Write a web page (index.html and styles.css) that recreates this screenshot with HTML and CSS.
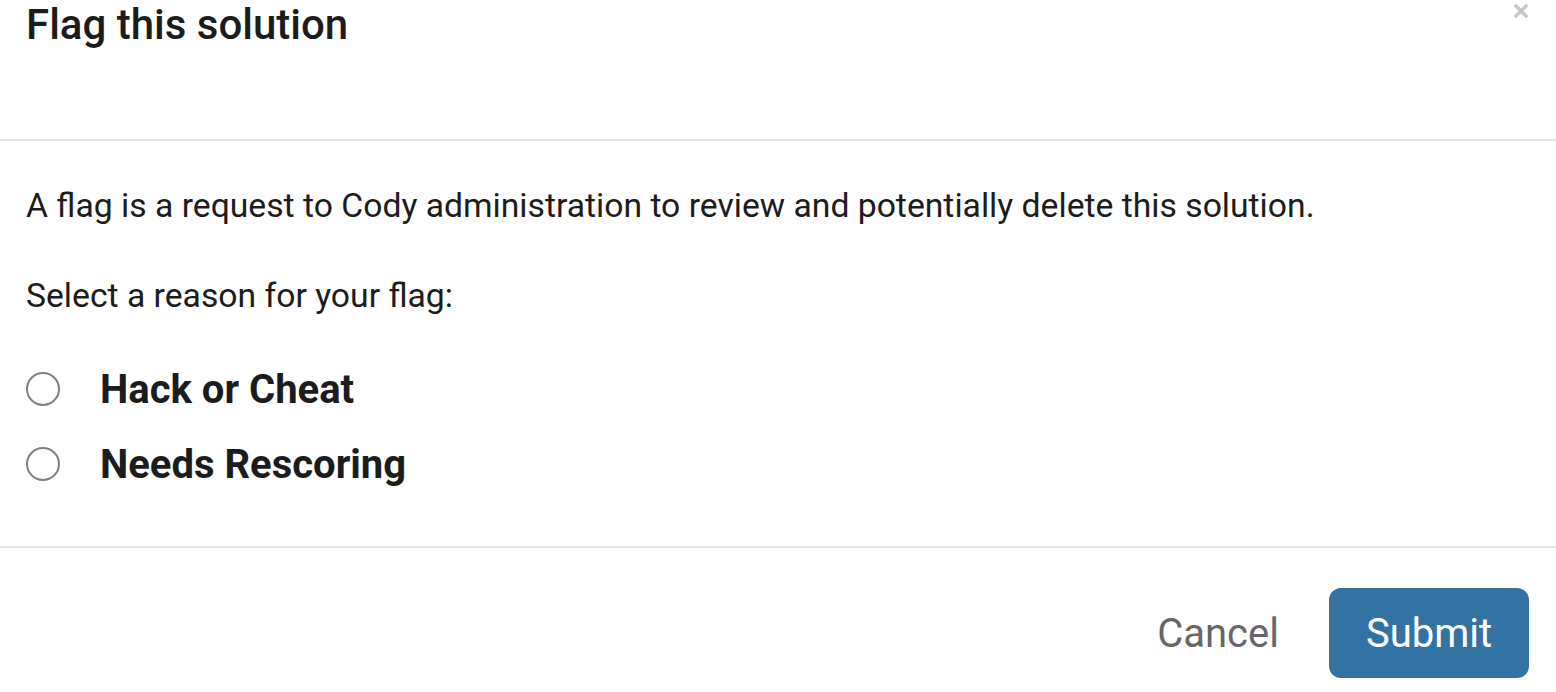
FILE: index.html
```html
<!DOCTYPE html>
<html>
<head>
<meta charset="utf-8">
<link rel="stylesheet" href="styles.css">
</head>
<body>
<div class="modal">
  <div class="modal-header">
    <h4 class="modal-title">Flag this solution</h4>
    <button class="close" type="button" aria-label="Close">
      <svg class="close-icon" viewBox="0 0 14 14" width="14" height="14" aria-hidden="true">
        <path d="M2 2 L12 12 M12 2 L2 12" stroke="#c8c8c8" stroke-width="3.4" stroke-linecap="square" fill="none"/>
      </svg>
    </button>
  </div>
  <div class="modal-body">
    <p class="intro">A flag is a request to Cody administration to review and potentially delete this solution.</p>
    <p class="prompt">Select a reason for your flag:</p>
    <div class="options">
      <label class="option"><span class="radio"></span><span class="option-label">Hack or Cheat</span></label>
      <label class="option"><span class="radio"></span><span class="option-label">Needs Rescoring</span></label>
    </div>
  </div>
  <div class="modal-footer">
    <button class="btn btn-link" type="button">Cancel</button>
    <button class="btn btn-primary" type="button">Submit</button>
  </div>
</div>
</body>
</html>
```

FILE: styles.css
```css
html, body {
  margin: 0;
  padding: 0;
  background: #ffffff;
}

body {
  font-family: Roboto, "Liberation Sans", Arial, sans-serif;
  color: #1c1c1c;
}

.modal {
  width: 1556px;
  height: 692px;
  display: flex;
  flex-direction: column;
  overflow: hidden;
}

.modal-header {
  position: relative;
  height: 139px;
  padding: 0 26px;
  border-bottom: 2px solid #e5e5e5;
  box-sizing: content-box;
}

.modal-title {
  margin: 0;
  font-size: 42px;
  font-weight: 500;
  line-height: 50px;
  color: #1c1c1c;
}

.close {
  position: absolute;
  top: 3px;
  right: 28px;
  border: 0;
  background: none;
  padding: 0;
  width: 14px;
  height: 15px;
  display: flex;
  align-items: center;
  justify-content: center;
  cursor: pointer;
}

.close-icon {
  display: block;
}

.modal-body {
  padding: 44px 26px 0;
  height: 361px;
  box-sizing: content-box;
  border-bottom: 2px solid #e5e5e5;
}

.intro, .prompt {
  margin: 0;
  font-size: 33.7px;
  line-height: 42px;
  color: #1c1c1c;
}

.prompt {
  margin-top: 48px;
}

.options {
  margin-top: 50px;
  display: flex;
  flex-direction: column;
  gap: 31px;
}

.option {
  display: flex;
  align-items: center;
  gap: 40px;
  height: 44px;
}

.radio {
  width: 30px;
  height: 30px;
  border: 2px solid #808080;
  border-radius: 50%;
  flex: none;
}

.option-label {
  font-size: 40px;
  font-weight: 700;
  color: #1c1c1c;
}

.modal-footer {
  flex: 1;
  display: flex;
  justify-content: flex-end;
  align-items: flex-start;
  gap: 50px;
  padding: 40px 27px 0;
}

.btn {
  font-family: Roboto, "Liberation Sans", Arial, sans-serif;
  font-size: 40px;
  height: 90px;
  border-radius: 12px;
  border: 0;
  cursor: pointer;
}

.btn-link {
  background: none;
  color: #666666;
  padding: 0;
}

.btn-primary {
  width: 200px;
  background: #3273a4;
  color: #ffffff;
}
```
